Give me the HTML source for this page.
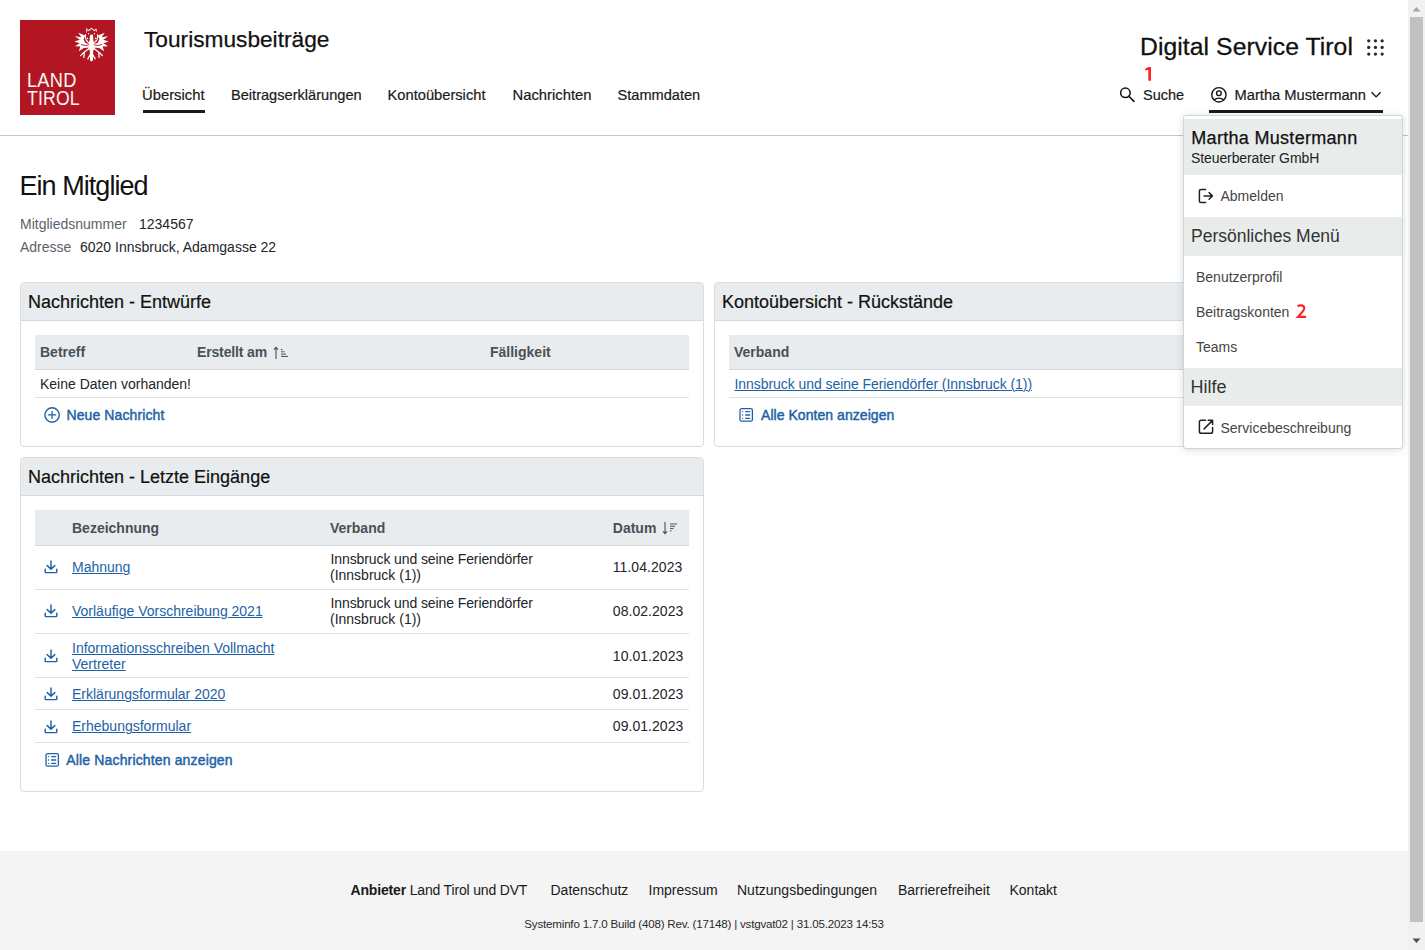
<!DOCTYPE html>
<html lang="de">
<head>
<meta charset="utf-8">
<title>Tourismusbeiträge</title>
<style>
html,body{margin:0;padding:0;background:#fff;}
body{width:1425px;height:950px;overflow:hidden;position:relative;font-family:"Liberation Sans",sans-serif;color:#1a1a1a;}
.t{position:absolute;white-space:nowrap;line-height:1;}
.abs{position:absolute;}
svg{position:absolute;overflow:visible;}
/* scrollbar */
#sb{position:absolute;left:1408px;top:0;width:17px;height:950px;background:#f1f1f1;}
#sb .thumb{position:absolute;left:2px;top:17px;width:13px;height:905px;background:#c1c1c1;}
/* panels */
.panel{position:absolute;border:1px solid #d8dde0;border-radius:4px;background:#fff;box-sizing:border-box;overflow:hidden;}
.phead{position:absolute;left:0;top:0;right:0;height:37px;background:#e8ecee;border-bottom:1px solid #d3d9dc;}
.thead{position:absolute;background:#e8ecee;border-bottom:1px solid #d3d9dc;box-sizing:border-box;}
.hr{position:absolute;height:1px;background:#dde2e5;}
.th{font-weight:bold;font-size:14px;color:#495057;}
.td{font-size:14px;color:#212529;}
.lnk{font-size:14px;color:#1d62a6;text-decoration:underline;text-underline-offset:1.3px;text-decoration-thickness:1px;}
.act{font-size:14px;font-weight:bold;color:#1d62a6;}
.dd-sec{position:absolute;left:1px;right:1px;background:#e8ecea;}
</style>
</head>
<body>
<!-- HEADER -->
<div class="abs" style="left:20px;top:20px;width:95px;height:95px;background:#b21622;"></div>
<svg style="left:74px;top:27px" width="34" height="34" viewBox="0 0 34 34">
<g fill="#fff" stroke="none">
<path d="M11.2 8.6 L4.2 5.8 L7.4 10.2 L0.8 9.2 L5.8 12.8 L0.3 14.4 L5.6 16.2 L1 19.2 L6.4 19.6 L4.8 24.2 L9.8 21 L15.6 20.6 L15.6 17.2 L11.4 16 L9.6 12.4 Z"/>
<path d="M23.8 8.6 L30.8 5.8 L27.6 10.2 L34.2 9.2 L29.2 12.8 L34.7 14.4 L29.4 16.2 L34 19.2 L28.6 19.6 L30.2 24.2 L25.2 21 L19.4 20.6 L19.4 17.2 L23.6 16 L25.4 12.4 Z"/>
<path d="M16 7.8 L19 7.8 L19.4 13.5 L20.6 16.5 L20.4 21.5 L19.2 24 L18.9 33.4 L17.5 34.4 L16.1 33.4 L15.8 24 L14.6 21.5 L14.4 16.5 L15.6 13.5 Z"/>
</g>
<g fill="none" stroke="#b21622" stroke-width="0.9">
<path d="M7 17.4 Q11.5 19.6 15.2 17.8 M28 17.4 Q23.5 19.6 19.8 17.8"/>
</g>
<g fill="none" stroke="#fff" stroke-width="1.1" stroke-linecap="round">
<path d="M12.6 5 L12.8 2 L14.8 3.6 L17.5 1.2 L20.2 3.6 L22.2 2 L22.4 5" stroke-dasharray="1.4 0.9" opacity="0.85"/>
<path d="M11.6 7.6 Q10.8 13.8 15 15.8 M23.4 7.6 Q24.2 13.8 20 15.8" stroke-dasharray="1.6 0.8"/>
<path d="M15.6 21 L8.6 26.6 M19.4 21 L26.4 26.6 M10.4 25 L9.8 30.4 M24.6 25 L25.2 30.4 M8.6 26.6 L6.6 28.6 M26.4 26.6 L28.4 28.6 M16 28 L13.8 31.8 M19 28 L21.2 31.8" stroke-width="1.3"/>
</g>
<g fill="#fff">
<circle cx="13.4" cy="11.4" r="0.8"/><circle cx="13" cy="13.6" r="0.7"/><circle cx="21.6" cy="11.4" r="0.8"/><circle cx="22" cy="13.6" r="0.7"/>
<circle cx="14.6" cy="6.8" r="0.7"/><circle cx="20.4" cy="6.8" r="0.7"/>
</g>
</svg>
<div class="t" style="left:27px;top:70.9px;font-size:19.6px;color:#f6f6f6;transform:scaleX(0.93);transform-origin:0 0;letter-spacing:0.25px;">LAND</div>
<div class="t" style="left:27px;top:88.6px;font-size:19.6px;color:#f6f6f6;transform:scaleX(0.9);transform-origin:0 0;letter-spacing:0.2px;">TIROL</div>

<div class="t" style="left:144px;top:28px;font-size:22.7px;color:#111;-webkit-text-stroke:0.25px #111;">Tourismusbeiträge</div>

<div class="t" style="left:142px;top:87.5px;font-size:14.8px;color:#1a1a1a;-webkit-text-stroke:0.2px #1a1a1a;">Übersicht</div>
<div class="t" style="left:231px;top:87.5px;font-size:14.6px;color:#1a1a1a;-webkit-text-stroke:0.2px #1a1a1a;">Beitragserklärungen</div>
<div class="t" style="left:387.5px;top:87.5px;font-size:14.7px;color:#1a1a1a;-webkit-text-stroke:0.2px #1a1a1a;">Kontoübersicht</div>
<div class="t" style="left:512.5px;top:87.5px;font-size:14.8px;color:#1a1a1a;-webkit-text-stroke:0.2px #1a1a1a;">Nachrichten</div>
<div class="t" style="left:617.5px;top:87.5px;font-size:14.6px;color:#1a1a1a;-webkit-text-stroke:0.2px #1a1a1a;">Stammdaten</div>
<div class="abs" style="left:143px;top:110px;width:62px;height:3px;background:#1a1a1a;"></div>
<div class="abs" style="left:0;top:135px;width:1408px;height:1px;background:#c4c4c4;"></div>

<div class="t" style="left:1140px;top:34.5px;font-size:24.7px;color:#111;-webkit-text-stroke:0.3px #111;letter-spacing:0.08px;">Digital Service Tirol</div>
<!-- grid -->
<svg style="left:1367px;top:39px" width="18" height="18" viewBox="0 0 18 18" fill="#2a2a2a"><circle cx="1.75" cy="1.8" r="1.65"/><circle cx="8.45" cy="1.8" r="1.65"/><circle cx="15.15" cy="1.8" r="1.65"/><circle cx="1.75" cy="8.45" r="1.65"/><circle cx="8.45" cy="8.45" r="1.65"/><circle cx="15.15" cy="8.45" r="1.65"/><circle cx="1.75" cy="15.1" r="1.65"/><circle cx="8.45" cy="15.1" r="1.65"/><circle cx="15.15" cy="15.1" r="1.65"/></svg>
<svg style="left:1144px;top:66px" width="10" height="16" viewBox="0 0 10 16"><path d="M7 0.9 V14.8 H4.3 V3.7 L1.3 4.7 V2.6 L4.7 0.9 Z" fill="#ff2424"/></svg>
<!-- search icon -->
<svg style="left:1119px;top:87px" width="17" height="16" viewBox="0 0 17 16" fill="none" stroke="#111" stroke-width="1.55">
<circle cx="6.4" cy="5.8" r="4.75"/><line x1="9.8" y1="9.2" x2="15" y2="14.4" stroke-linecap="round"/>
</svg>
<div class="t" style="left:1143px;top:88px;font-size:14.5px;color:#1a1a1a;-webkit-text-stroke:0.2px #1a1a1a;">Suche</div>
<!-- user icon -->
<svg style="left:1210px;top:86px" width="18" height="18" viewBox="0 0 18 18" fill="none" stroke="#111" stroke-width="1.35">
<circle cx="8.9" cy="8.8" r="7.15"/><circle cx="8.9" cy="7.25" r="2.35"/><path d="M3.9 13.9 Q8.9 10.4 13.9 13.9"/>
</svg>
<div class="t" style="left:1234.5px;top:88px;font-size:14.7px;color:#1a1a1a;-webkit-text-stroke:0.2px #1a1a1a;">Martha Mustermann</div>
<svg style="left:1371px;top:91px" width="11" height="8" viewBox="0 0 11 8" fill="none" stroke="#111" stroke-width="1.35">
<path d="M0.6 1.3 L5.1 5.9 L9.6 1.3"/>
</svg>
<div class="abs" style="left:1209px;top:110px;width:174px;height:3px;background:#1a1a1a;"></div>

<!-- PAGE TITLE -->
<div class="t" style="left:19.5px;top:172.5px;font-size:27px;letter-spacing:-0.95px;color:#111;">Ein Mitglied</div>
<div class="t" style="left:20px;top:216.8px;font-size:14px;color:#5a6268;">Mitgliedsnummer</div>
<div class="t" style="left:139px;top:216.8px;font-size:14px;color:#212529;">1234567</div>
<div class="t" style="left:20px;top:239.9px;font-size:14px;color:#5a6268;">Adresse</div>
<div class="t" style="left:80px;top:239.9px;font-size:14px;color:#212529;">6020 Innsbruck, Adamgasse 22</div>

<!-- PANEL 1 -->
<div class="panel" style="left:20px;top:282px;width:684px;height:165px;">
  <div class="phead"></div>
</div>
<div class="t" style="left:28px;top:292.7px;font-size:18px;color:#111;-webkit-text-stroke:0.2px #111;">Nachrichten - Entwürfe</div>
<div class="thead" style="left:35px;top:335px;width:654px;height:35px;"></div>
<div class="t th" style="left:40px;top:345.1px;">Betreff</div>
<div class="t th" style="left:197px;top:345.1px;letter-spacing:-0.15px;">Erstellt am</div>
<svg style="left:272px;top:346px" width="18" height="14" viewBox="0 0 18 14" fill="none" stroke="#495057">
<path d="M4 13 V1.5 M2 3.6 L4 1.3 L6 3.6" stroke-width="1.1"/>
<path d="M9 3.5 H10.5 M9 5.8 H12.5 M9 8.1 H14 M9 10.4 H16" stroke-width="1"/>
</svg>
<div class="t th" style="left:490px;top:345.1px;">Fälligkeit</div>
<div class="t td" style="left:40px;top:377.1px;">Keine Daten vorhanden!</div>
<div class="hr" style="left:35px;top:397px;width:654px;"></div>
<svg style="left:43px;top:406px" width="18" height="18" viewBox="0 0 18 18" fill="none" stroke="#1d62a6" stroke-width="1.4">
<circle cx="9.1" cy="9" r="7.2"/><path d="M9.1 5 V12.9 M5.1 8.95 H13.1" stroke-width="1.25"/>
</svg>
<div class="t act" style="left:66.5px;top:407.9px;font-weight:normal;-webkit-text-stroke:0.45px #1d62a6;letter-spacing:0.1px;">Neue Nachricht</div>

<!-- PANEL 2 -->
<div class="panel" style="left:714px;top:282px;width:674px;height:165px;">
  <div class="phead"></div>
</div>
<div class="t" style="left:722px;top:292.7px;font-size:18px;color:#111;-webkit-text-stroke:0.2px #111;">Kontoübersicht - Rückstände</div>
<div class="thead" style="left:729px;top:335px;width:644px;height:35px;"></div>
<div class="t th" style="left:734px;top:345.1px;">Verband</div>
<div class="t lnk" style="left:734.5px;top:376.8px;letter-spacing:-0.06px;">Innsbruck und seine Feriendörfer (Innsbruck (1))</div>
<div class="hr" style="left:729px;top:397px;width:644px;"></div>
<svg style="left:738px;top:407px" width="16" height="16" viewBox="0 0 16 16" fill="none" stroke="#1d62a6" stroke-width="1.3">
<rect x="2" y="1.7" width="12.4" height="12.5" rx="1.5"/><path d="M4.6 4.6 H4.7 M4.6 8 H4.7 M4.6 11.3 H4.7 M7.7 4.6 H11.7 M7.7 8 H11.7 M7.7 11.3 H11.7" stroke-linecap="round"/>
</svg>
<div class="t act" style="left:761px;top:408px;font-weight:normal;-webkit-text-stroke:0.45px #1d62a6;letter-spacing:0.05px;">Alle Konten anzeigen</div>

<!-- PANEL 3 -->
<div class="panel" style="left:20px;top:457px;width:684px;height:335px;">
  <div class="phead"></div>
</div>
<div class="t" style="left:28px;top:467.7px;font-size:18px;color:#111;-webkit-text-stroke:0.2px #111;">Nachrichten - Letzte Eingänge</div>
<div class="thead" style="left:35px;top:510px;width:654px;height:36px;"></div>
<div class="t th" style="left:72px;top:520.9px;">Bezeichnung</div>
<div class="t th" style="left:330px;top:520.9px;">Verband</div>
<div class="t th" style="left:612.8px;top:520.9px;">Datum</div>
<svg style="left:661px;top:521px" width="18" height="14" viewBox="0 0 18 14" fill="none" stroke="#495057">
<path d="M4 1 V12.5 M2 10.4 L4 12.7 L6 10.4" stroke-width="1.1"/>
<path d="M9 3 H16 M9 5.3 H14 M9 7.6 H12.5 M9 9.9 H10.5" stroke-width="1"/>
</svg>
<svg style="left:43.5px;top:559.5px" width="14" height="14" viewBox="0 0 14 14" fill="none" stroke="#1d62a6" stroke-width="1.45" stroke-linecap="round" stroke-linejoin="round"><path d="M7 1 V9 M3.2 5.6 L7 9.2 L10.8 5.6 M1.2 9.2 V11.8 Q1.2 12.6 2 12.6 H12 Q12.8 12.6 12.8 11.8 V9.2"/></svg>
<div class="t lnk" style="left:72px;top:559.7px;">Mahnung</div>
<div class="t td" style="left:330.5px;top:552px;letter-spacing:-0.1px;">Innsbruck und seine Feriendörfer</div>
<div class="t td" style="left:330px;top:567.9px;">(Innsbruck (1))</div>
<div class="t td" style="left:612.8px;letter-spacing:0.05px;top:559.9px;">11.04.2023</div>
<div class="hr" style="left:35px;top:589px;width:654px;"></div>
<svg style="left:43.5px;top:603.5px" width="14" height="14" viewBox="0 0 14 14" fill="none" stroke="#1d62a6" stroke-width="1.45" stroke-linecap="round" stroke-linejoin="round"><path d="M7 1 V9 M3.2 5.6 L7 9.2 L10.8 5.6 M1.2 9.2 V11.8 Q1.2 12.6 2 12.6 H12 Q12.8 12.6 12.8 11.8 V9.2"/></svg>
<div class="t lnk" style="left:72px;top:603.7px;">Vorläufige Vorschreibung 2021</div>
<div class="t td" style="left:330.5px;top:596px;letter-spacing:-0.1px;">Innsbruck und seine Feriendörfer</div>
<div class="t td" style="left:330px;top:611.9px;">(Innsbruck (1))</div>
<div class="t td" style="left:612.8px;letter-spacing:0.05px;top:603.9px;">08.02.2023</div>
<div class="hr" style="left:35px;top:633px;width:654px;"></div>
<svg style="left:43.5px;top:648.5px" width="14" height="14" viewBox="0 0 14 14" fill="none" stroke="#1d62a6" stroke-width="1.45" stroke-linecap="round" stroke-linejoin="round"><path d="M7 1 V9 M3.2 5.6 L7 9.2 L10.8 5.6 M1.2 9.2 V11.8 Q1.2 12.6 2 12.6 H12 Q12.8 12.6 12.8 11.8 V9.2"/></svg>
<div class="t lnk" style="left:72px;top:640.7px;">Informationsschreiben Vollmacht</div>
<div class="t lnk" style="left:72px;top:656.7px;">Vertreter</div>
<div class="t td" style="left:612.8px;letter-spacing:0.05px;top:648.6px;">10.01.2023</div>
<div class="hr" style="left:35px;top:677px;width:654px;"></div>
<svg style="left:43.5px;top:686.5px" width="14" height="14" viewBox="0 0 14 14" fill="none" stroke="#1d62a6" stroke-width="1.45" stroke-linecap="round" stroke-linejoin="round"><path d="M7 1 V9 M3.2 5.6 L7 9.2 L10.8 5.6 M1.2 9.2 V11.8 Q1.2 12.6 2 12.6 H12 Q12.8 12.6 12.8 11.8 V9.2"/></svg>
<div class="t lnk" style="left:72px;top:686.5px;">Erklärungsformular 2020</div>
<div class="t td" style="left:612.8px;letter-spacing:0.05px;top:686.5px;">09.01.2023</div>
<div class="hr" style="left:35px;top:709px;width:654px;"></div>
<svg style="left:43.5px;top:719.5px" width="14" height="14" viewBox="0 0 14 14" fill="none" stroke="#1d62a6" stroke-width="1.45" stroke-linecap="round" stroke-linejoin="round"><path d="M7 1 V9 M3.2 5.6 L7 9.2 L10.8 5.6 M1.2 9.2 V11.8 Q1.2 12.6 2 12.6 H12 Q12.8 12.6 12.8 11.8 V9.2"/></svg>
<div class="t lnk" style="left:72px;top:719.4px;">Erhebungsformular</div>
<div class="t td" style="left:612.8px;letter-spacing:0.05px;top:719.4px;">09.01.2023</div>
<div class="hr" style="left:35px;top:742px;width:654px;"></div>
<svg style="left:44px;top:752px" width="16" height="16" viewBox="0 0 16 16" fill="none" stroke="#1d62a6" stroke-width="1.3"><rect x="2" y="1.7" width="12.4" height="12.5" rx="1.5"/><path d="M4.6 4.6 H4.7 M4.6 8 H4.7 M4.6 11.3 H4.7 M7.7 4.6 H11.7 M7.7 8 H11.7 M7.7 11.3 H11.7" stroke-linecap="round"/></svg>
<div class="t act" style="left:66.3px;top:752.9px;font-weight:normal;-webkit-text-stroke:0.45px #1d62a6;letter-spacing:0.15px;">Alle Nachrichten anzeigen</div>
<!-- DROPDOWN -->
<div class="abs" style="left:1183px;top:115px;width:220px;height:334px;box-sizing:border-box;border:1px solid #c9d7de;border-radius:3px;background:#fff;box-shadow:0 1px 8px rgba(0,0,0,0.13);"></div>
<div class="abs" style="left:1184px;top:119px;width:218px;height:56px;background:#e8ecea;"></div>
<div class="abs" style="left:1184px;top:217px;width:218px;height:39px;background:#e8ecea;"></div>
<div class="abs" style="left:1184px;top:368px;width:218px;height:38px;background:#e8ecea;"></div>
<div class="t" style="left:1191.3px;top:129px;font-size:18px;color:#111;-webkit-text-stroke:0.25px #111;letter-spacing:0.3px;">Martha Mustermann</div>
<div class="t" style="left:1191px;top:150.7px;font-size:14px;color:#222;letter-spacing:-0.1px;">Steuerberater GmbH</div>
<svg style="left:1198px;top:188px" width="16" height="16" viewBox="0 0 16 16" fill="none" stroke="#222" stroke-width="1.5">
<path d="M7.6 1.4 H3.1 Q1.4 1.4 1.4 3.1 V12.9 Q1.4 14.6 3.1 14.6 H7.6 M6.1 7.9 H14 M11.1 4.6 L14.4 7.9 L11.1 11.2" stroke-linecap="round" stroke-linejoin="round"/>
</svg>
<div class="t" style="left:1220.5px;top:188.8px;font-size:14px;color:#444;">Abmelden</div>
<div class="t" style="left:1191px;top:227.8px;font-size:17.5px;color:#333;">Persönliches Menü</div>
<div class="t" style="left:1196px;top:269.9px;font-size:14px;color:#444;">Benutzerprofil</div>
<div class="t" style="left:1196px;top:305px;font-size:14px;color:#444;">Beitragskonten</div>
<svg style="left:1294px;top:302px" width="14" height="18" viewBox="0 0 14 18"><path d="M3.5 4.3 Q4.6 3.35 7.1 3.35 Q10.25 3.35 10.25 6.3 Q10.25 8 8.5 9.8 L3.9 14.9 H12.1" fill="none" stroke="#ff2424" stroke-width="2.1" stroke-linejoin="miter"/></svg>
<div class="t" style="left:1196px;top:340.2px;font-size:14px;color:#444;">Teams</div>
<div class="t" style="left:1190.5px;top:377.6px;font-size:18px;color:#333;">Hilfe</div>
<svg style="left:1198px;top:419px" width="16" height="16" viewBox="0 0 16 16" fill="none" stroke="#222" stroke-width="1.5">
<path d="M7.6 1.3 H3.2 Q1.4 1.3 1.4 3.1 V12.5 Q1.4 14.3 3.2 14.3 H12.8 Q14.6 14.3 14.6 12.5 V8.4 M10.2 1.3 H14.6 V5.4 M14.3 1.6 L6.1 9.9" stroke-linecap="round" stroke-linejoin="round"/>
</svg>
<div class="t" style="left:1220.5px;top:420.5px;font-size:14px;color:#444;">Servicebeschreibung</div>

<!-- FOOTER -->
<div class="abs" style="left:0;top:851px;width:1408px;height:99px;background:#f4f4f4;"></div>
<div class="t" style="left:350.5px;top:883.4px;font-size:14px;color:#1a1a1a;letter-spacing:-0.17px;"><b>Anbieter</b> Land Tirol und DVT</div>
<div class="t" style="left:550.5px;top:883.4px;font-size:14px;color:#1a1a1a;">Datenschutz</div>
<div class="t" style="left:648.5px;top:883.4px;font-size:14px;color:#1a1a1a;">Impressum</div>
<div class="t" style="left:737px;top:883.4px;font-size:14px;color:#1a1a1a;">Nutzungsbedingungen</div>
<div class="t" style="left:898px;top:883.4px;font-size:14px;color:#1a1a1a;">Barrierefreiheit</div>
<div class="t" style="left:1009.5px;top:883.4px;font-size:14px;color:#1a1a1a;">Kontakt</div>
<div class="t" style="left:524.3px;top:918px;font-size:11.6px;letter-spacing:-0.2px;color:#2a2a2a;">Systeminfo 1.7.0 Build (408) Rev. (17148) | vstgvat02 | 31.05.2023 14:53</div>

<!-- SCROLLBAR -->
<div id="sb"><div class="thumb"></div>
<svg style="left:4px;top:6px" width="9" height="6" viewBox="0 0 9 6"><path d="M0.5 5.5 L4.5 1 L8.5 5.5 Z" fill="#a3a3a3"/></svg>
<svg style="left:4px;top:938px" width="9" height="6" viewBox="0 0 9 6"><path d="M0.5 0.5 L4.5 5 L8.5 0.5 Z" fill="#505050"/></svg>
</div>

</body>
</html>
